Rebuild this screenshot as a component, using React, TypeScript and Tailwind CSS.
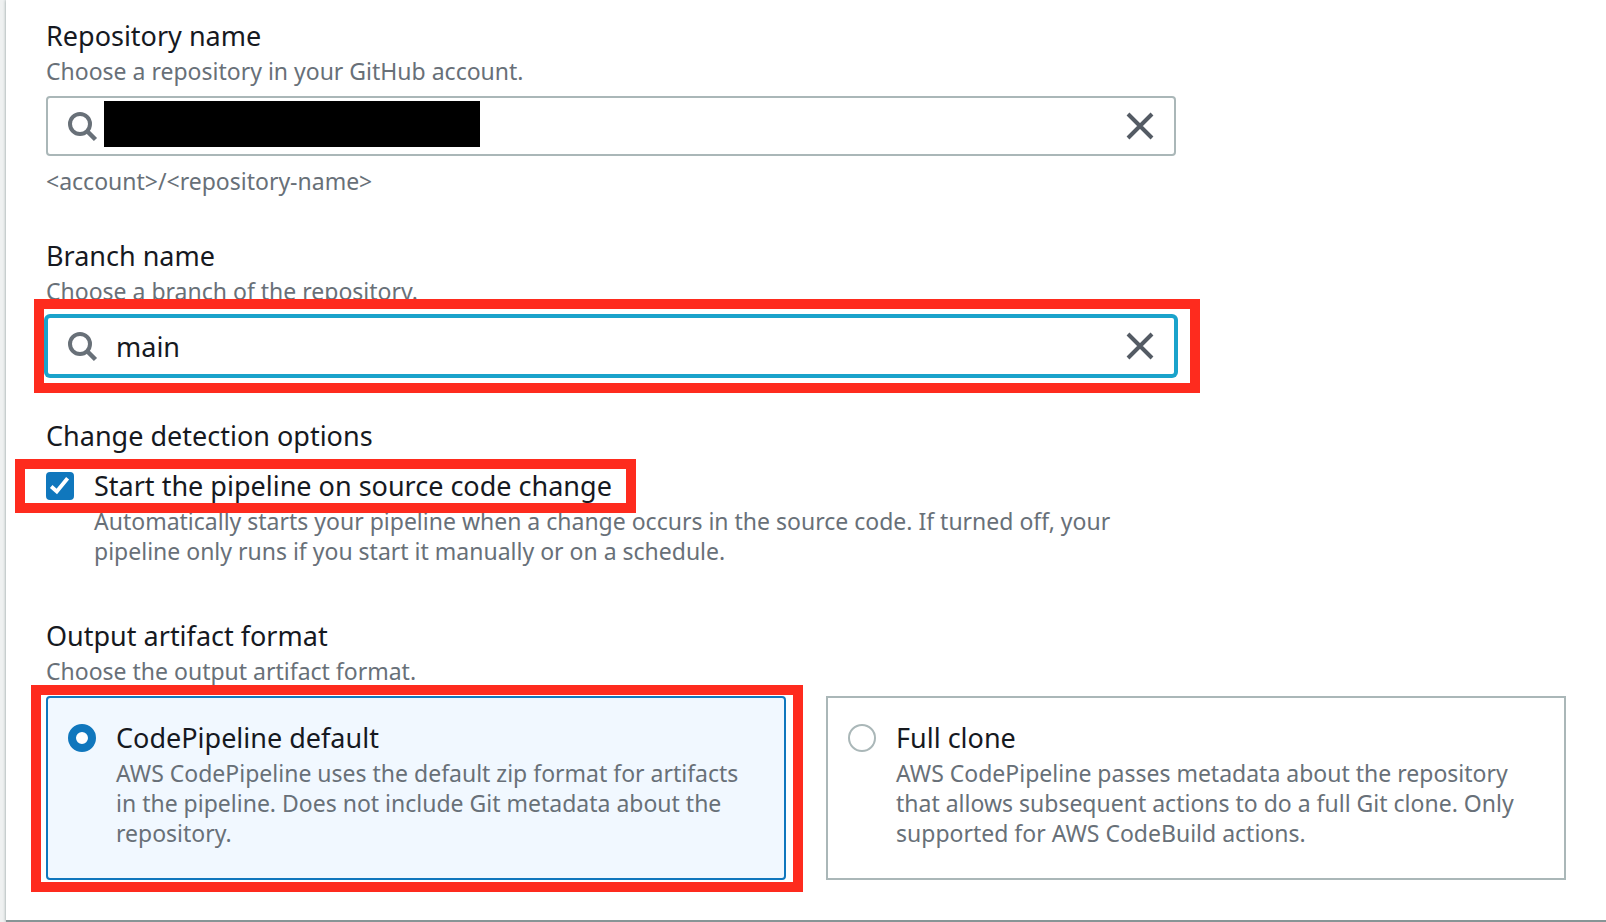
import { InputHTMLAttributes, ReactNode, useState } from 'react';
import { clsx } from 'clsx';

const SearchIcon = () => (
  <svg
    className="absolute left-5 top-4 size-8 pointer-events-none text-[#687078]"
    viewBox="0 0 32 32"
    fill="none"
    stroke="currentColor"
    strokeWidth="4"
    aria-hidden="true"
  >
    <circle cx="14" cy="12" r="10" />
    <path d="M20.5 18.5l9 9" strokeWidth="4.5" />
  </svg>
);

const CloseIcon = () => (
  <svg
    className="size-7"
    viewBox="0 0 28 28"
    fill="none"
    stroke="currentColor"
    strokeWidth="4"
    aria-hidden="true"
  >
    <path d="M2 2l24 24M26 2L2 26" />
  </svg>
);

/** Red marker frame drawn over the part of the form to look at */
const Highlight = ({ className }: { className: string }) => (
  <span
    className={clsx('absolute border-10 border-[#fe2b1e] pointer-events-none', className)}
    aria-hidden="true"
  />
);

const Title = ({ children }: { children: ReactNode }) => (
  <span className="block text-[27px] leading-10 text-[#16191f]">{children}</span>
);

const Description = ({ children, id }: { children: ReactNode; id?: string }) => (
  <span id={id} className="block text-[23px] leading-[30px] text-[#687078]">
    {children}
  </span>
);

interface SearchFieldProps {
  id: string;
  label: string;
  description: string;
  value: string;
  onChange: (value: string) => void;
  active?: boolean;
  children?: ReactNode;
}

const SearchField = ({
  id,
  label,
  description,
  value,
  onChange,
  active,
  children,
}: SearchFieldProps) => (
  <div className="max-w-[1130px]">
    <label htmlFor={id}>
      <Title>{label}</Title>
    </label>
    <Description id={`${id}-description`}>{description}</Description>
    <div className="relative mt-2.5">
      <input
        id={id}
        type="text"
        value={value}
        onChange={(e) => onChange(e.target.value)}
        aria-describedby={`${id}-description`}
        className={clsx(
          'block h-15 w-full rounded-sm border-2 bg-white pl-17 pr-20 text-[27px] text-[#16191f] outline-none',
          active ? 'border-[#1aa3cb] ring-2 ring-[#1aa3cb]' : 'border-[#aab7b8]'
        )}
      />
      <SearchIcon />
      <button
        type="button"
        aria-label="Clear"
        onClick={() => onChange('')}
        className="absolute right-[22px] top-4 text-[#545b64]"
      >
        <CloseIcon />
      </button>
      {children}
    </div>
  </div>
);

interface TileProps extends InputHTMLAttributes<HTMLInputElement> {
  label: string;
  description: string;
  children?: ReactNode;
}

const Tile = ({ label, description, checked, children, ...props }: TileProps) => (
  <label
    className={clsx(
      'relative flex items-start gap-5 border-2 px-5 pt-5 pb-[30px]',
      checked ? 'rounded-sm border-[#1077bd] bg-[#f1f8ff]' : 'border-[#aab7b8] bg-white'
    )}
  >
    <input
      type="radio"
      checked={checked}
      className="mt-1.5 size-7 shrink-0 appearance-none rounded-full border-2 border-[#aab7b8] bg-white checked:border-8 checked:border-[#1077bd]"
      {...props}
    />
    <span>
      <Title>{label}</Title>
      <Description>{description}</Description>
    </span>
    {children}
  </label>
);

export default function App() {
  const [repository, setRepository] = useState('');
  const [branch, setBranch] = useState('main');
  const [detect, setDetect] = useState(true);
  const [format, setFormat] = useState('default');

  return (
    <div className="min-h-screen bg-[#eff1f1] pl-1.5 font-['Noto_Sans','Open_Sans',sans-serif]">
      <form className="border-b-2 border-[#879596] bg-white px-10 pt-4 pb-10 shadow-[0_0_3px_#879596]">
        <SearchField
          id="repository"
          label="Repository name"
          description="Choose a repository in your GitHub account."
          value={repository}
          onChange={setRepository}
        >
          {/* redacted value */}
          <span className="absolute left-[58px] top-[5px] h-[46px] w-94 bg-black" />
        </SearchField>
        <div className="mt-2.5">
          <Description>&lt;account&gt;/&lt;repository-name&gt;</Description>
        </div>

        <div className="mt-10">
          <SearchField
            id="branch"
            label="Branch name"
            description="Choose a branch of the repository."
            value={branch}
            onChange={setBranch}
            active
          >
            <Highlight className="-left-3 -right-6 -inset-y-[17px]" />
          </SearchField>
        </div>

        <fieldset className="mt-10 max-w-[1130px]">
          <legend>
            <Title>Change detection options</Title>
          </legend>
          <label className="relative mt-2.5 inline-flex items-center gap-5 align-top">
            <input
              type="checkbox"
              checked={detect}
              onChange={(e) => setDetect(e.target.checked)}
              aria-describedby="detect-description"
              className="size-7 appearance-none rounded-sm border-2 border-[#aab7b8] bg-white checked:border-[#1077bd] checked:bg-[#1077bd]"
            />
            {detect && (
              <svg
                className="absolute left-0 top-1.5 size-7 pointer-events-none"
                viewBox="0 0 28 28"
                fill="none"
                stroke="white"
                strokeWidth="3.8"
                aria-hidden="true"
              >
                <path d="M5.2 14.5l5.6 5L21.6 6.2" />
              </svg>
            )}
            <Title>Start the pipeline on source code change</Title>
            <Highlight className="-left-[31px] -right-6 -inset-y-[7px]" />
          </label>
          <div className="pl-12">
            <Description id="detect-description">
              Automatically starts your pipeline when a change occurs in the source code. If turned
              off, your pipeline only runs if you start it manually or on a schedule.
            </Description>
          </div>
        </fieldset>

        <fieldset className="mt-[50px]">
          <legend>
            <Title>Output artifact format</Title>
          </legend>
          <Description>Choose the output artifact format.</Description>
          <div className="mt-2.5 grid grid-cols-2 gap-10">
            <Tile
              name="format"
              label="CodePipeline default"
              description="AWS CodePipeline uses the default zip format for artifacts in the pipeline. Does not include Git metadata about the repository."
              checked={format === 'default'}
              onChange={() => setFormat('default')}
            >
              <Highlight className="-left-[17px] -right-[19px] -top-[13px] -bottom-3.5" />
            </Tile>
            <Tile
              name="format"
              label="Full clone"
              description="AWS CodePipeline passes metadata about the repository that allows subsequent actions to do a full Git clone. Only supported for AWS CodeBuild actions."
              checked={format === 'clone'}
              onChange={() => setFormat('clone')}
            />
          </div>
        </fieldset>
      </form>
    </div>
  );
}
